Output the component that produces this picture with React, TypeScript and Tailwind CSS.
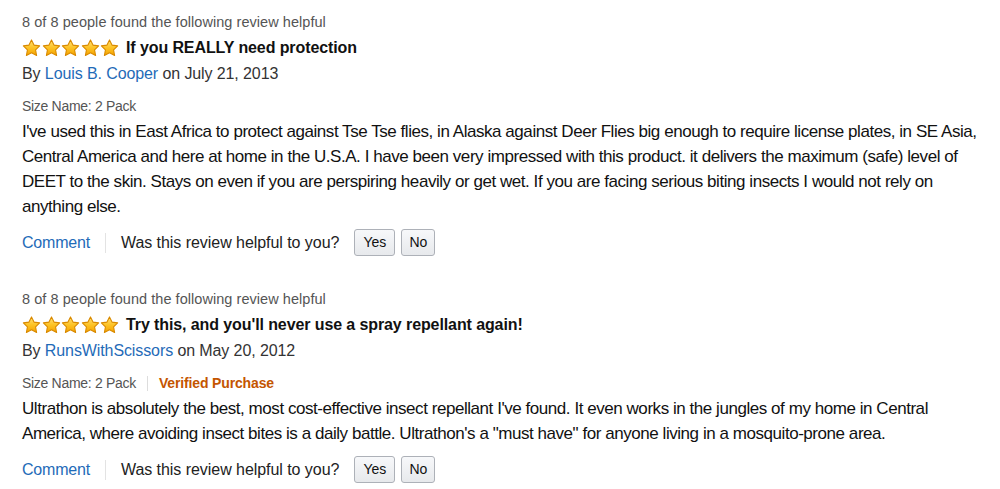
import React from "react";

type Review = {
  title: string;
  author: string;
  date: string;
  verified: boolean;
  lines: string[];
};

const reviews: Review[] = [
  {
    title: "If you REALLY need protection",
    author: "Louis B. Cooper",
    date: "July 21, 2013",
    verified: false,
    lines: [
      "I've used this in East Africa to protect against Tse Tse flies, in Alaska against Deer Flies big enough to require license plates, in SE Asia,",
      "Central America and here at home in the U.S.A. I have been very impressed with this product. it delivers the maximum (safe) level of",
      "DEET to the skin. Stays on even if you are perspiring heavily or get wet. If you are facing serious biting insects I would not rely on",
      "anything else.",
    ],
  },
  {
    title: "Try this, and you'll never use a spray repellant again!",
    author: "RunsWithScissors",
    date: "May 20, 2012",
    verified: true,
    lines: [
      "Ultrathon is absolutely the best, most cost-effective insect repellant I've found. It even works in the jungles of my home in Central",
      "America, where avoiding insect bites is a daily battle. Ultrathon's a \"must have\" for anyone living in a mosquito-prone area.",
    ],
  },
];

function Star({ id }: { id: string }) {
  return (
    <svg width="19" height="18" viewBox="0 0 24 23">
      <defs>
        <linearGradient id={id} x1="0" y1="0" x2="0" y2="1">
          <stop offset="0" stopColor="#ffe27a" />
          <stop offset="0.5" stopColor="#fdc326" />
          <stop offset="1" stopColor="#f5a300" />
        </linearGradient>
      </defs>
      <path
        d="M12 1.2l3.2 6.6 7.2 1-5.2 5.1 1.3 7.2L12 17.7l-6.5 3.4 1.3-7.2-5.2-5.1 7.2-1z"
        fill={`url(#${id})`}
        stroke="#d98a00"
        strokeWidth="1.4"
        strokeLinejoin="round"
      />
    </svg>
  );
}

function Stars({ prefix }: { prefix: string }) {
  return (
    <div className="flex gap-[0.5px]">
      {[0, 1, 2, 3, 4].map((i) => (
        <Star key={i} id={`${prefix}-${i}`} />
      ))}
    </div>
  );
}

function ReviewBlock({ review, idx }: { review: Review; idx: number }) {
  return (
    <div className="flex flex-col">
      <p className="text-[14.5px] leading-[18px] text-[#555] tracking-[0.05px]">
        8 of 8 people found the following review helpful
      </p>
      <div className="mt-[7px] flex items-center gap-[7px]">
        <Stars prefix={`r${idx}`} />
        <h3 className="text-[16px] leading-[20px] font-bold text-[#111] tracking-[-0.1px]">{review.title}</h3>
      </div>
      <p className="mt-[6px] text-[16px] leading-[20px] text-[#333] tracking-[-0.1px]">
        By <span className="text-[#1f6bb8]">{review.author}</span> on {review.date}
      </p>
      <div className="mt-[14px] flex items-center text-[14px] leading-[16px] tracking-[-0.3px]">
        <span className="text-[#555]">Size Name: 2 Pack</span>
        {review.verified && (
          <>
            <span className="mx-[11px] h-[15px] w-px bg-[#ddd]" />
            <span className="font-bold tracking-[-0.15px] text-[#c45500]">Verified Purchase</span>
          </>
        )}
      </div>
      <div className="mt-[5px] text-[17px] leading-[25px] text-[#111] tracking-[-0.45px]">
        {review.lines.map((l, i) => (
          <p key={i} className="whitespace-nowrap">
            {l}
          </p>
        ))}
      </div>
      <div className="mt-[10px] flex items-center text-[16px] tracking-[-0.05px]">
        <span className="text-[#1f6bb8] tracking-[-0.2px]">Comment</span>
        <span className="mx-[15px] h-[20px] w-px bg-[#e3e3e3]" />
        <span className="text-[#222]">Was this review helpful to you?</span>
        <button className="ml-[15px] h-[27px] w-[41px] rounded-[3px] border border-[#adb1b8] bg-gradient-to-b from-[#f7f8fa] to-[#e7e9ec] text-[14px] text-[#111]">
          Yes
        </button>
        <button className="ml-[6px] h-[27px] w-[34px] rounded-[3px] border border-[#adb1b8] bg-gradient-to-b from-[#f7f8fa] to-[#e7e9ec] text-[14px] text-[#111]">
          No
        </button>
      </div>
    </div>
  );
}

export default function App() {
  return (
    <div
      className="h-[489px] w-[1000px] overflow-hidden bg-white pl-[22px] pt-[13px]"
      style={{ fontFamily: '"Liberation Sans", Arial, sans-serif' }}
    >
      <div className="flex flex-col gap-[34px]">
        {reviews.map((r, i) => (
          <ReviewBlock key={i} review={r} idx={i} />
        ))}
      </div>
    </div>
  );
}
